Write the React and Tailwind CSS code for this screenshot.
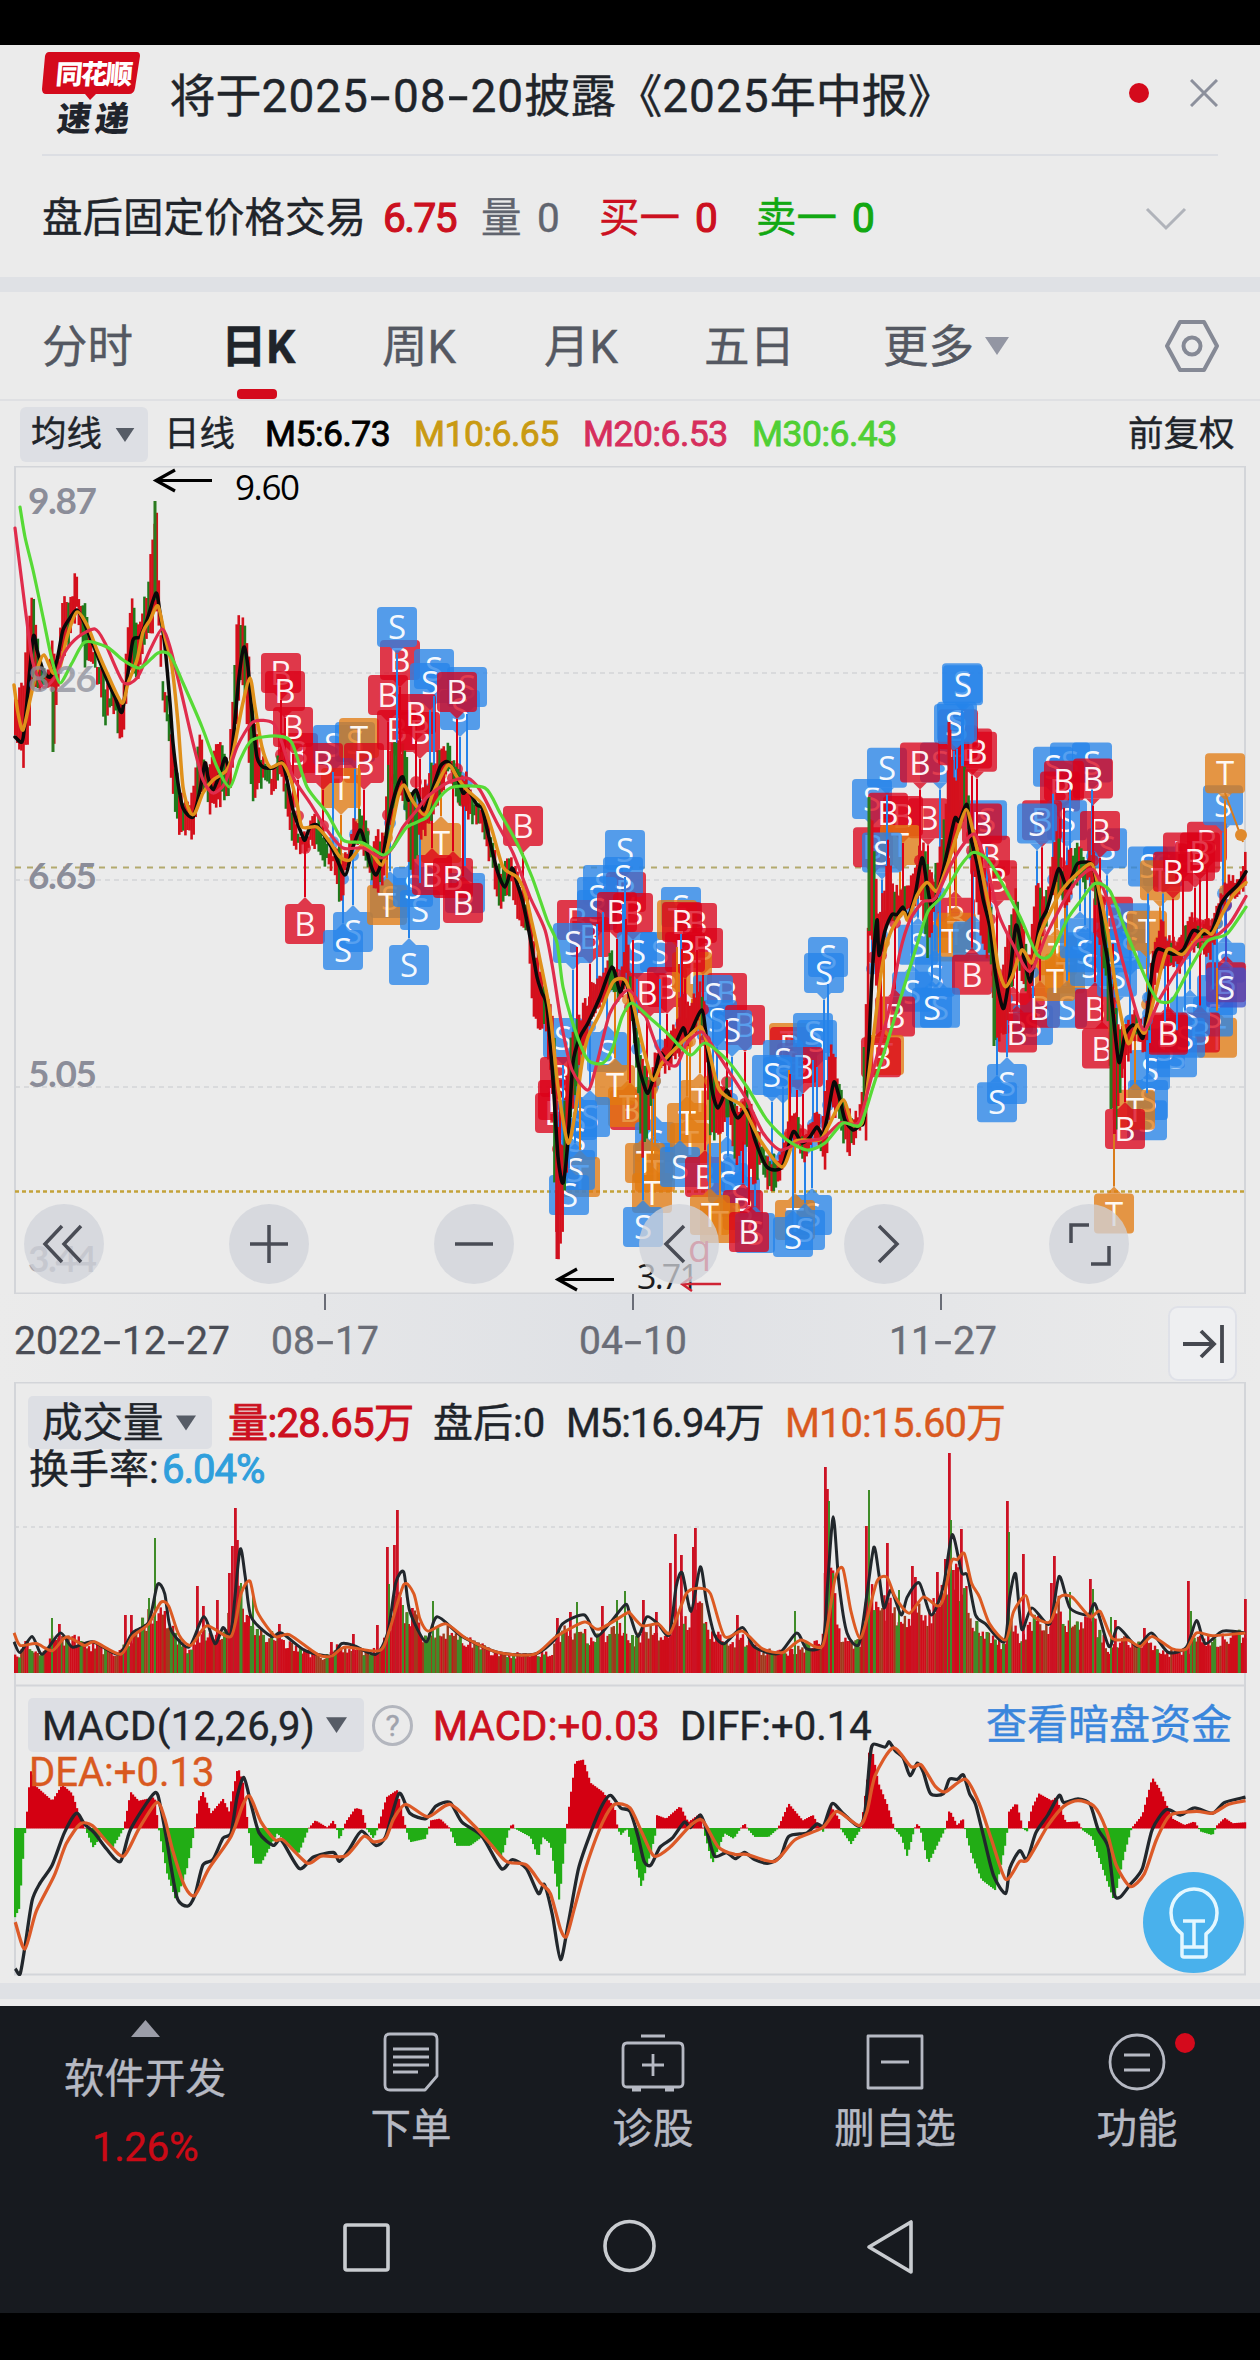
import React from 'react';

// Moving averages of the price chart, as flat x,y lists in chart pixels
const MA5 = [15,737,22,742,25,723,33,638,37,650,43,670,50,677,57,660,63,630,72,615,77,610,83,620,90,637,98,657,107,680,115,697,122,712,128,673,133,640,140,637,147,620,156,593,160,613,165,647,170,703,173,743,178,783,183,808,193,817,200,790,205,763,208,777,213,790,220,773,225,758,230,767,235,720,239,677,244,647,248,667,252,713,257,757,263,767,273,768,282,762,287,780,293,810,302,835,305,840,310,827,317,825,325,837,333,850,345,875,352,850,360,830,365,843,370,863,376,875,383,857,388,823,397,787,403,777,408,800,416,790,423,810,430,797,440,767,448,762,457,777,463,793,468,790,477,805,482,808,488,833,497,870,505,887,512,868,517,883,523,903,530,937,537,977,542,993,547,1007,553,1080,558,1157,563,1183,568,1140,573,1063,580,1037,588,1023,600,997,612,967,620,992,625,980,632,1007,637,1057,643,1082,648,1093,655,1073,660,1053,667,1060,673,1050,683,1028,688,1037,702,1010,707,1047,712,1090,718,1108,727,1090,733,1110,738,1118,747,1110,755,1140,767,1167,782,1167,793,1132,802,1143,810,1137,817,1127,823,1135,828,1113,834,1082,840,1100,845,1120,853,1130,860,1125,864,1087,868,1037,872,953,877,900,879,933,885,910,892,895,897,895,903,888,908,897,915,877,922,842,927,867,932,888,940,867,948,833,955,805,959,808,967,792,970,820,977,847,983,880,990,907,995,947,1000,973,1004,982,1010,950,1016,905,1022,927,1030,958,1035,930,1040,903,1047,890,1053,870,1059,852,1067,870,1073,857,1078,847,1092,848,1098,873,1103,913,1108,940,1113,987,1119,1033,1125,1007,1133,998,1138,1003,1143,1010,1148,980,1153,940,1158,927,1173,932,1183,928,1193,910,1203,913,1212,910,1220,887,1227,877,1237,868,1246,855];
const MA10 = [14,685,18,713,23,730,30,700,37,670,44,655,53,673,60,667,67,637,77,612,88,627,97,650,107,673,122,703,128,683,137,660,143,632,150,620,158,606,165,637,172,667,178,723,183,787,190,812,195,813,203,793,213,780,227,770,233,753,242,707,250,678,255,707,262,747,270,767,282,763,290,777,297,803,302,827,317,827,330,842,340,857,350,860,362,845,370,850,382,865,390,837,398,797,404,785,412,800,425,815,433,793,448,765,457,777,467,790,483,805,492,830,503,867,517,877,525,893,532,923,540,960,550,1013,558,1087,568,1143,575,1113,582,1063,588,1037,600,1013,613,982,625,980,633,1003,643,1047,653,1080,662,1063,677,1047,690,1035,701,1027,708,1047,718,1087,727,1097,743,1107,760,1140,782,1167,793,1143,802,1140,820,1140,828,1127,843,1100,852,1123,862,1123,867,1090,875,1023,882,967,890,913,903,893,908,900,917,877,927,865,937,873,947,850,957,820,966,797,973,817,983,860,992,903,998,943,1005,962,1012,953,1022,928,1032,940,1040,913,1053,887,1062,872,1077,857,1092,848,1100,877,1108,913,1117,970,1128,1015,1137,998,1145,1005,1155,970,1167,928,1183,932,1203,910,1212,913,1223,893,1233,877,1246,865];
const MA20 = [15,528,22,583,28,630,33,663,43,687,55,677,65,652,78,637,95,629,105,643,123,682,137,678,150,650,162,629,170,647,180,687,193,743,203,780,213,793,225,783,237,747,253,722,273,723,282,743,293,777,310,803,327,830,343,848,363,848,382,858,393,847,403,827,417,810,427,797,447,783,467,778,480,790,497,823,513,853,530,897,545,930,553,970,562,1027,572,1070,588,1090,597,1063,610,1013,628,990,643,1010,657,1047,667,1063,677,1065,687,1043,702,1032,717,1053,730,1073,747,1100,763,1133,780,1150,800,1142,823,1138,840,1123,858,1123,868,1090,883,1033,890,980,900,930,910,900,923,883,935,880,950,850,963,830,975,820,987,850,998,893,1013,923,1030,948,1047,913,1067,877,1080,860,1093,853,1107,880,1123,940,1143,1002,1160,973,1180,943,1197,920,1213,917,1230,903,1246,878];
const MA30 = [20,507,25,537,33,570,43,617,52,660,60,683,72,663,85,642,107,647,123,660,140,668,158,653,170,655,183,683,202,727,217,767,230,787,240,760,252,740,277,736,292,743,307,787,327,813,343,840,363,843,383,855,393,847,407,827,427,817,440,797,453,787,485,788,500,813,517,843,532,877,547,920,557,943,563,987,575,1030,588,1060,603,1063,613,1047,622,1017,632,1003,650,1018,667,1033,690,1055,705,1043,727,1060,747,1087,767,1120,787,1140,807,1150,825,1143,843,1123,860,1125,873,1087,888,1040,900,1000,918,920,928,892,943,877,960,850,973,837,987,843,1003,867,1020,897,1037,932,1050,933,1067,900,1080,883,1095,866,1110,873,1127,913,1147,957,1158,975,1172,975,1187,950,1207,920,1227,913,1246,888];

// High/low range of the candles: x, top, bottom
const RANGE = [14,690,740,18,690,755,22,680,767,27,620,740,31,582,690,34,610,690,40,660,695,47,665,692,51,640,690,53,650,752,56,660,694,60,610,660,64,595,655,69,600,640,75,568,615,79,600,632,84,600,668,88,625,665,95,655,680,100,665,700,104,680,728,109,690,715,114,695,710,117,700,738,122,690,740,126,630,690,131,598,672,135,620,685,140,610,665,146,590,637,151,537,635,155,501,610,158,590,640,162,680,710,167,700,740,171,740,790,175,770,828,181,800,838,187,800,835,192,790,838,196,740,815,200,735,790,204,760,790,208,770,812,215,740,812,222,740,800,227,760,805,231,700,780,236,612,720,239,617,690,243,615,680,247,650,760,252,700,807,258,750,793,265,765,780,270,770,793,280,750,780,286,780,820,292,810,850,298,830,853,305,835,850,311,810,845,318,820,855,325,840,868,333,850,870,337,840,905,341,860,912,345,850,870,352,820,850,358,810,840,364,820,870,370,850,885,377,830,893,383,835,880,388,740,840,397,740,800,405,750,810,408,800,880,411,790,880,418,800,840,428,770,830,440,745,800,448,742,770,456,770,805,465,770,820,475,800,825,482,805,835,490,830,870,499,870,910,506,850,905,510,860,890,515,860,920,520,890,937,526,895,930,532,940,1020,537,955,1030,545,990,1035,551,1010,1100,554,1050,1225,557,1120,1259,561,1150,1245,564,1080,1190,570,1030,1120,580,1010,1060,590,985,1030,600,970,1010,610,950,990,618,985,1010,625,925,980,632,1000,1040,637,1030,1100,641,1060,1160,647,1080,1130,655,1050,1080,665,1040,1070,675,1020,1065,680,990,1050,690,1000,1040,700,980,1020,706,1030,1080,709,1060,1140,717,1080,1145,727,1080,1120,735,1110,1165,745,1090,1140,752,1110,1185,760,1140,1170,767,1150,1195,777,1160,1185,785,1130,1160,794,1100,1140,802,1130,1165,812,1110,1140,820,1120,1160,825,1080,1175,829,1034,1110,836,1070,1120,842,1100,1147,850,1110,1155,858,1110,1130,861,1090,1120,866,940,1110,869,790,910,871,800,920,877,895,980,884,860,910,887,830,900,892,870,910,900,870,900,907,870,900,913,850,890,920,825,880,926,840,940,932,860,900,939,830,870,944,800,860,949,716,850,953,770,830,960,750,810,965,755,805,968,790,830,975,830,880,982,860,930,990,890,940,994,930,1018,1000,950,1010,1007,900,1000,1015,870,930,1021,900,960,1028,930,975,1036,860,930,1044,880,910,1050,840,880,1056,815,870,1062,850,890,1070,830,880,1078,830,860,1085,840,870,1092,835,860,1098,870,930,1105,900,960,1111,960,1080,1114,980,1100,1120,1000,1050,1127,990,1030,1135,985,1010,1142,1000,1030,1148,950,1000,1154,920,960,1160,900,950,1168,915,940,1178,915,950,1190,890,930,1200,900,930,1210,900,935,1219,870,900,1226,860,885,1236,860,880,1246,830,870];

const stretch = (x, y, from) => (x >= from ? 620 + ((y - 620) * 15) / 14 : y);

// Trade marks: kind + box centre, later ones lie on top
const MARKS = `B281,673 B298,753 B293,727 B285,691 S333,745 S355,742 T359,738 B364,763 T341,788 B323,763
B400,660 S397,627 B388,695 S434,669 S430,683 S467,687 S460,710 B457,692 B397,730 B420,732 B416,714
B305,924 S353,932 S343,950 S390,898 T387,905 T441,843 S420,910 S413,887 S409,965 B432,875 S465,893 B453,878 B463,903 B523,826
S625,850 S603,885 B626,892 S623,877 S597,897 B577,920 S597,910 B633,913 B590,937 B617,912 S573,943
S660,952 S637,952 B667,987 B647,993 S681,907 T677,920 B697,923 B682,922 B703,948 T692,972 B685,952
B727,993 S713,995 S717,1020 B745,1025 S732,1030 T789,1043 B790,1047 B797,1063 S813,1033 S817,1040 B803,1067 S783,1060 S783,1077 S772,1075 S828,957 S824,973
S563,1038 B560,1077 B555,1113 B558,1100 S607,1052 B630,1110 T628,1107 T615,1085 S590,1117 S577,1120 S577,1140 T580,1177 S575,1170 S569,1195
S655,1142 S653,1163 T655,1172 T645,1163 T652,1193 S643,1227 T700,1100 T690,1143 T687,1123 S680,1167 B705,1177 S727,1163 S728,1183 S740,1197 B743,1210 T720,1223 T710,1215 S755,1233 B749,1232 S812,1215 T795,1220 S805,1230 S793,1237
S872,787 S887,758 S940,753 B958,737 S962,679 S963,681 B972,740 B977,743 B958,722 S957,715 S954,717 B920,753 B928,805 B903,803 B888,800 B873,832 T900,830 S882,837
S987,807 B982,810 B990,840 B997,863 B955,898 T956,912 T950,920 S973,920 S918,923 S935,953 B972,951 S912,967 S940,982 S932,982 B895,990 T884,1026 B881,1028
S1070,753 S1092,753 S1053,757 B1060,780 B1064,770 B1093,768 S1067,807 B1042,807 S1037,810 S1107,833 B1100,817
B1013,987 S1033,998 B1017,1005 B1040,982 S1007,1053 S997,1070 T1057,933 T1065,950 S1067,982 T1055,957 S1080,917 S1085,930 S1090,943 B1095,983 B1102,1020 B1113,897 S1130,903 S1130,927 S1117,953 S1112,930 T1147,910
S1163,850 S1148,850 T1160,863 B1183,837 B1207,827 B1200,837 B1195,845 B1173,855 S1223,793 T1225,763
T1217,1010 S1225,940 S1217,970 S1213,990 B1200,1005 S1190,990 S1177,1028 S1165,1020 S1150,1040 S1185,1010 B1168,1007 B1168,1005 S1147,1087 S1148,1068 T1135,1077 B1125,1095 T1114,1174 B1226,958 X1226,963`
  .split(/\s+/)
  .map((m) => {
    const [x, y] = m.slice(1).split(',').map(Number);
    return { kind: m[0], x, y: stretch(x, y, 863) };
  });

const MARK_COLORS = { B: '#dc0018', S: '#2583ea', T: '#e27a10', X: '#3b53cf' };

// Volume and MACD data are kept on a finer grid, one list for each half of the chart
const GX = 2.489;
const GY = 2.8;
const grid = (left, right) => {
  const out = [];
  for (let i = 0; i < left.length; i += 2) out.push([left[i] / GX, 1440 + left[i + 1] / GY]);
  for (let i = 0; i < right.length; i += 2) out.push([630 + right[i] / GX, 1440 + right[i + 1] / GY]);
  return out;
};

const VOL = grid(
  [35,600,45,600,55,560,90,600,130,555,150,560,185,560,240,580,290,600,320,560,350,520,375,480,400,480,430,540,465,590,490,540,520,550,550,550,575,480,590,400,605,500,640,540,690,555,740,580,800,610,840,580,900,590,940,590,965,540,985,420,1005,490,1030,500,1060,560,1090,520,1130,550,1180,570,1230,595,1310,605,1375,595,1382,540,1430,530,1480,560,1540,520],
  [0,560,50,530,90,560,110,470,140,510,165,440,200,540,240,570,270,550,320,590,380,595,420,580,475,570,485,350,500,380,520,560,570,570,590,400,610,450,650,470,690,520,710,450,740,500,775,420,800,360,825,400,850,500,880,545,930,570,945,500,970,560,1000,510,1040,520,1060,430,1080,530,1110,500,1150,500,1190,590,1230,560,1280,570,1340,595,1390,590,1400,560,1450,560,1535,540]
);
const VOL5 = grid(
  [35,565,50,595,80,550,105,600,150,540,180,580,230,565,295,600,330,540,370,510,392,405,410,430,425,530,470,580,507,495,535,570,555,525,575,540,597,308,610,380,625,495,675,550,700,540,760,590,825,605,850,570,880,575,935,600,965,540,985,400,1005,370,1020,480,1060,565,1088,495,1150,550,1240,595,1330,600,1380,560,1400,515,1455,490,1485,550,1520,510,1557,460],
  [0,490,20,550,42,495,70,515,98,545,115,410,130,372,152,480,175,355,190,450,210,545,235,570,280,525,310,580,370,598,415,540,440,585,480,570,492,400,506,215,520,400,540,540,570,572,590,430,607,300,620,380,632,470,650,420,675,490,690,440,720,400,750,490,780,410,802,265,825,370,840,380,860,490,885,515,932,565,945,440,960,375,975,530,1000,470,1045,515,1068,382,1095,470,1140,490,1158,460,1192,578,1215,525,1262,578,1298,540,1340,595,1385,580,1410,505,1432,570,1475,535,1532,540]
);
const VOL10 = grid(
  [35,540,50,575,90,570,130,590,165,552,210,575,235,565,300,600,330,550,370,515,400,455,420,465,445,545,475,575,515,520,575,550,600,430,622,395,640,480,685,550,720,545,790,600,825,605,860,580,945,590,970,530,1005,405,1030,430,1045,500,1065,535,1110,515,1160,555,1240,595,1330,600,1385,550,1455,510,1490,530,1560,485],
  [0,485,30,520,70,515,100,540,140,430,170,415,200,430,235,550,280,535,330,585,380,595,425,560,480,575,510,390,530,360,550,480,572,555,590,500,615,395,640,385,660,440,695,485,730,440,765,465,780,445,800,340,815,335,832,318,850,400,870,440,895,515,935,560,955,480,985,435,1000,490,1045,510,1070,440,1100,440,1145,495,1170,480,1200,555,1240,560,1270,578,1300,550,1350,585,1385,585,1410,540,1450,548,1532,540]
);
// Single tall volume bars
const SPIKES = 'g155,1538 r197,1586 r203,1606 r217,1600 r229,1573 r232,1546 r235,1508 r237,1540 g241,1583 g52,1618 r59,1624 r125,1615 r131,1615 g149,1598 g253,1596 r279,1624 r331,1642 r353,1634 r377,1625 r387,1547 g389,1584 r394,1545 r397,1510 g403,1605 r412,1608 g433,1601 r557,1618 r570,1612 g577,1602 r602,1606 g617,1600 g625,1591 r643,1600 r656,1612 r670,1563 r675,1534 r681,1555 r693,1547 r695,1528 r737,1615 g795,1611 r825,1467 r827,1489 g829,1501 g833,1573 r866,1526 g869,1490 r887,1543 r912,1566 r915,1577 g899,1590 r937,1572 r945,1559 r949,1453 g951,1520 r953,1570 r961,1529 r1007,1501 g1009,1532 r1023,1554 r1051,1583 r1054,1556 g1070,1592 r1090,1579 g1093,1589 g1111,1617 r1115,1620 r1144,1628 r1188,1581 g1191,1611 r1245,1599'
  .split(' ')
  .map((s) => [s[0], ...s.slice(1).split(',').map(Number)]);

const HIST = grid(
  [35,1340,48,1310,62,1100,66,1087,68,1010,78,920,90,970,130,1010,155,965,180,990,200,1060,212,1087,232,1140,250,1110,280,1140,308,1087,325,985,345,1010,385,1000,395,1087,415,1210,438,1290,465,1200,485,1087,495,1010,505,985,525,1045,555,1005,570,1040,592,915,605,960,618,1087,632,1185,650,1185,690,1100,742,1160,768,1087,785,1065,815,1085,830,1065,838,1087,845,1120,860,1070,885,1030,900,1035,912,1087,930,1115,940,1087,962,1000,988,980,1010,1087,1020,1125,1060,1115,1072,1065,1095,1060,1120,1087,1135,1135,1170,1135,1200,1110,1248,1170,1268,1087,1275,1073,1282,1087,1320,1110,1340,1170,1350,1110,1370,1130,1392,1290,1410,1087,1418,1010,1432,900,1452,895,1470,960,1500,985,1530,1030,1537,1087,1545,1105,1560,1087],
  [0,1120,28,1250,62,1110,66,1050,90,1060,125,1025,145,1070,175,1045,182,1087,205,1185,235,1100,258,1115,275,1087,285,1073,292,1087,310,1110,345,1110,368,1087,395,1018,430,1065,455,1050,470,1080,482,1098,490,1060,500,1025,520,1060,524,1087,550,1130,575,1087,590,950,597,843,605,880,618,960,640,1020,658,1087,675,1110,690,1165,708,1087,716,1073,722,1087,742,1185,785,1087,795,1035,815,1080,828,1058,838,1110,850,1160,875,1230,910,1260,938,1110,940,1045,962,1015,978,1087,988,1095,1000,1030,1018,990,1050,1010,1060,1000,1085,1070,1115,1068,1125,1090,1150,1110,1175,1195,1205,1290,1230,1160,1248,1087,1275,1050,1300,945,1320,980,1350,1060,1380,1078,1405,1068,1420,1095,1450,1105,1460,1080,1480,1058,1500,1073,1535,1070]
);
const DIFF = grid(
  [38,1480,50,1495,62,1420,80,1290,100,1240,130,1190,160,1100,190,1045,210,1075,235,1100,265,1145,300,1180,325,1090,385,988,400,1030,415,1120,440,1280,467,1305,485,1275,505,1190,530,1175,555,1115,575,1100,590,1000,607,945,625,1020,645,1100,680,1135,700,1120,745,1200,780,1168,830,1155,845,1180,870,1145,900,1095,935,1135,960,1110,993,990,1020,1045,1060,1060,1085,1025,1120,1015,1150,1070,1200,1110,1248,1200,1275,1175,1310,1200,1340,1270,1355,1245,1375,1330,1395,1455,1415,1350,1440,1200,1470,1100,1500,1020,1520,995,1545,1030],
  [0,1040,20,1110,35,1180,52,1190,75,1140,105,1115,135,1070,150,1085,175,1050,190,1090,210,1165,240,1155,262,1172,285,1155,310,1175,345,1185,375,1165,395,1110,440,1100,465,1075,482,1080,503,1018,530,1045,570,1082,585,1040,597,890,605,852,635,860,645,845,660,870,680,890,697,940,715,905,730,930,748,990,780,990,795,950,815,950,830,938,845,990,860,1020,880,1110,905,1220,935,1270,945,1200,970,1150,988,1175,1010,1100,1040,1050,1068,995,1080,1015,1115,1005,1145,1020,1165,1090,1190,1140,1205,1270,1220,1280,1245,1245,1275,1200,1300,1090,1335,1035,1370,1050,1405,1030,1450,1045,1480,1015,1532,1000]
);
const DEA = grid(
  [38,1350,62,1425,90,1320,135,1220,165,1130,200,1075,230,1080,270,1130,308,1165,345,1090,390,1015,410,1060,430,1150,460,1250,485,1275,520,1200,575,1110,605,1020,622,998,650,1070,685,1120,705,1120,765,1185,800,1165,860,1165,905,1110,930,1125,960,1115,980,1060,1010,1020,1065,1055,1120,1020,1180,1080,1220,1130,1260,1180,1310,1190,1345,1240,1370,1270,1395,1370,1410,1390,1430,1310,1460,1190,1500,1070,1530,1020],
  [0,1030,30,1100,60,1165,100,1140,150,1080,180,1065,220,1140,260,1160,290,1160,360,1180,410,1120,480,1085,515,1040,570,1080,590,1040,610,940,655,862,700,915,725,910,760,970,785,985,835,950,870,1020,900,1120,935,1230,970,1180,990,1175,1040,1080,1080,1025,1115,1010,1155,1025,1185,1090,1210,1190,1245,1250,1280,1215,1310,1120,1345,1050,1410,1040,1450,1045,1490,1020,1532,1010]
);

const noise = (n) => {
  const v = Math.sin(n * 12.9898) * 43758.5453;
  return v - Math.floor(v);
};

const pairs = (flat, from) => {
  const out = [];
  for (let i = 0; i < flat.length; i += 2) out.push([flat[i], stretch(flat[i], flat[i + 1], from)]);
  return out;
};

const triples = (flat, from) => {
  const out = [];
  for (let i = 0; i < flat.length; i += 3) {
    out.push([flat[i], stretch(flat[i], flat[i + 1], from), stretch(flat[i], flat[i + 2], from)]);
  }
  return out;
};

const valueAt = (pts, x, k = 1) => {
  let i = 1;
  while (i < pts.length - 1 && pts[i][0] < x) i += 1;
  const a = pts[i - 1];
  const b = pts[i];
  const t = Math.min(1, Math.max(0, (x - a[0]) / (b[0] - a[0])));
  return a[k] + (b[k] - a[k]) * t;
};

// Smooth path through the points
const curve = (pts) => {
  let d = `M${pts[0][0]} ${pts[0][1]}`;
  for (let i = 1; i < pts.length; i += 1) {
    const p0 = pts[Math.max(0, i - 2)];
    const p1 = pts[i - 1];
    const p2 = pts[i];
    const p3 = pts[Math.min(pts.length - 1, i + 1)];
    const n = [p1[0] + (p2[0] - p0[0]) / 8, p1[1] + (p2[1] - p0[1]) / 8, p2[0] - (p3[0] - p1[0]) / 8, p2[1] - (p3[1] - p1[1]) / 8, p2[0], p2[1]];
    d += `C${n.map((v) => v.toFixed(1)).join(' ')}`;
  }
  return d;
};

const ma5 = pairs(MA5, 863);
const ma10 = pairs(MA10, 889);
const ma20 = pairs(MA20, 889);
const ma30 = pairs(MA30, 917);
const range = triples(RANGE, 863);

const candles = [];
for (let x = 14; x <= 1244; x += 2.05) {
  const top = valueAt(range, x, 1) - 3 + noise(x) * 14;
  const bottom = valueAt(range, x, 2) + 3 - noise(x + 7) * 14;
  const rising = valueAt(range, x + 3, 1) < valueAt(range, x - 3, 1);
  candles.push({ x, top, h: Math.max(5, bottom - top), up: noise(x + 3) < (rising ? 0.9 : 0.6) });
}

const volumes = [];
for (let x = 14; x <= 1244; x += 2.05) {
  const y = valueAt(VOL, x);
  volumes.push({ x, y: Math.min(1660, y + (noise(x + 1) - 0.4) * (1673 - y) * 0.4), up: noise(x + 3) < 0.7 });
}

const hist = [];
for (let x = 14; x <= 1244; x += 2) hist.push({ x, y: valueAt(HIST, x + 1) });

const Mark = ({ kind, x, y }) => {
  const below = y > valueAt(ma5, x);
  const color = MARK_COLORS[kind];
  return (
    <g>
      <rect x={x - 20} y={y - 20} width="40" height="40" rx="4" fill={color} opacity="0.76" />
      <path d={below ? `M${x - 7} ${y - 20}l7 -7l7 7z` : `M${x - 7} ${y + 20}l7 7l7 -7z`} fill={color} opacity="0.76" />
      <text x={x} y={y + 12} textAnchor="middle" fontSize="33" fill="#fff" fillOpacity="0.95">{kind === 'X' ? 'S' : kind}</text>
    </g>
  );
};

const Stem = ({ kind, x, y }) => {
  const end = valueAt(ma5, x);
  const gap = Math.abs(end - y);
  if (gap < 30) return null;
  const start = y + (end > y ? 27 : -27);
  return (
    <g stroke={MARK_COLORS[kind]} fill={MARK_COLORS[kind]}>
      <line x1={x} x2={x} y1={start} y2={end} strokeWidth="2" />
      <circle cx={x} cy={end + (end > y ? -8 : 8)} r="6" stroke="none" opacity="0.7" />
    </g>
  );
};

const PriceChart = () => (
  <svg className="block h-[828px] w-[1260px] font-['Open_Sans',sans-serif]" viewBox="0 466 1260 828">
    <rect x="15" y="466.500" width="1230" height="827" fill="none" stroke="#d3d5d9" strokeWidth="2" />
    <path d="M15 673H1245M15 880H1245M15 1087H1245" stroke="#d4d5d7" strokeWidth="1.500" strokeDasharray="5 4" />
    <path d="M15 867.500H1245" stroke="#b3aa6e" strokeWidth="2" strokeDasharray="6 6" />
    <path d="M15 1191.500H1245" stroke="#c3a23a" strokeWidth="2.500" strokeDasharray="4 3" />
    {MARKS.map((m, i) => <Mark key={i} {...m} />)}
    {MARKS.map((m, i) => <Stem key={i} {...m} />)}
    <path d="M1225 793L1243 842" stroke="#d97c1c" strokeWidth="2" />
    <circle cx="1241" cy="835" r="6" fill="#e08a2c" />
    <path d="M1114 1130V1186" stroke="#d97c1c" strokeWidth="2" />
    {candles.map((c) => <rect key={c.x} x={c.x} y={c.top} width="2.600" height={c.h} fill={c.up ? '#d4101c' : '#1f7a1c'} />)}
    <path d="M53 690V752M155 501V600M869 797V931M994 952V1046M1111 984V1109" stroke="#2b7a1f" strokeWidth="3" />
    <path d="M949 722V813M557 1190V1259M1114.500 1014V1134" stroke="#cf1020" strokeWidth="3" />
    <g fill="none" strokeWidth="3.200" strokeLinejoin="round" strokeLinecap="round">
      <path d={curve(ma5)} stroke="#0a0a0a" strokeWidth="3.500" />
      <path d={curve(ma10)} stroke="#e0901a" strokeWidth="3.500" />
      <path d={curve(ma20)} stroke="#e02c4c" />
      <path d={curve(ma30)} stroke="#57da36" />
    </g>
    <g fontFamily="Lato, sans-serif" fontWeight="700" fontSize="37" fill="#8b8d99">
      <text x="28" y="514" textLength="69">9.87</text>
      <text x="28" y="692" textLength="69" opacity="0.75">8.26</text>
      <text x="28" y="889" textLength="69">6.65</text>
      <text x="28" y="1087" textLength="69">5.05</text>
      <text x="28" y="1272" textLength="69" opacity="0.7">3.44</text>
    </g>
    <g fill="none" stroke="#000" strokeWidth="3.200">
      <path d="M212 480.500H156M175 470L156 480.500L175 491" />
      <path d="M614 1279.500H558M577 1269L558 1279.500L577 1290" />
    </g>
    <text x="235" y="500" fontSize="35" textLength="65" fill="#000">9.60</text>
    <text x="637" y="1289" fontSize="34" textLength="62" fill="#1c1c1e">3.71</text>
    <text x="688" y="1262" fontSize="38" fill="#d8203f">q</text>
    <path d="M721 1284H682M692 1277L682 1284L692 1291" fill="none" stroke="#cf2334" strokeWidth="2.500" />
  </svg>
);

const Panels = () => (
  <svg className="block h-[594px] w-[1260px]" viewBox="0 1382 1260 594">
    <g fill="none" stroke="#d3d5d9" strokeWidth="2">
      <path d="M15 1685V1382.500H1245V1685" />
      <rect x="15" y="1685.500" width="1230" height="289" />
    </g>
    <path d="M15 1527H1245" stroke="#d4d5d7" strokeWidth="1.500" strokeDasharray="4 4" />
    {volumes.map((v) => <rect key={v.x} x={v.x} y={v.y} width="2.400" height={1673 - v.y} fill={v.up ? '#cf0d1a' : '#a03a1c'} />)}
    {volumes.filter((v) => noise(v.x + 11) < 0.18).map((v) => <rect key={v.x} x={v.x} y={v.y} width="3" height={1673 - v.y} fill="#3f8c28" />)}
    {SPIKES.map(([c, x, y]) => <rect key={`${x}-${y}`} x={x - 1} y={y} width={c === 'r' ? 2.8 : 2} height={1673 - y} fill={c === 'r' ? '#cc1224' : '#3f8c28'} />)}
    <g fill="none" strokeWidth="3" strokeLinejoin="round">
      <path d={curve(VOL5)} stroke="#22272c" />
      <path d={curve(VOL10)} stroke="#dc5a22" />
    </g>
    {hist.map((b) => (
      <rect key={b.x} x={b.x} y={Math.min(b.y, 1828)} width="2.200" height={Math.abs(b.y - 1828) + 0.5} fill={b.y < 1828 ? '#d40012' : '#22ad15'} />
    ))}
    <g fill="none" strokeWidth="3.300" strokeLinejoin="round">
      <path d={curve(DIFF)} stroke="#22272c" />
      <path d={curve(DEA)} stroke="#dc5a28" />
    </g>
  </svg>
);

// Dates use a wider hyphen than the font has
const DateText = ({ value }) => value.split('').map((ch, i) => (
  ch === '-' ? <span key={i} className="inline-block w-[0.52em] scale-x-[1.6] text-center">-</span> : ch
));

const Caret = ({ className }) => (
  <svg className={className} viewBox="0 0 20 15"><path d="M0 0H20L10 15Z" fill="currentColor" /></svg>
);

const RoundButton = ({ children }) => (
  <div className="flex h-20 w-20 items-center justify-center rounded-full bg-[#d0d3da]/75">
    <svg className="h-20 w-20" viewBox="0 0 80 80" fill="none" stroke="#494c55" strokeWidth="3.500">{children}</svg>
  </div>
);

const TabItem = ({ label, icon }) => (
  <div className="flex w-[242px] flex-col items-center">
    <svg className="mt-[24px] h-[64px] w-[64px]" viewBox="0 0 64 64" fill="none" stroke="#b6b9c3" strokeWidth="2.800" strokeLinejoin="round">{icon}</svg>
    <span className="mt-[5px] leading-[60px]">{label}</span>
  </div>
);

const App = () => (
  <div className="w-[1260px] overflow-hidden whitespace-nowrap bg-black font-[Roboto,'Noto_Sans_CJK_SC',sans-serif] text-[#20242a] [-webkit-text-stroke:0.4px]">
    <div className="mt-[45px] h-[1961px] bg-[#ebebeb]">
      {/* News line */}
      <div className="mx-[42px] flex h-[111px] items-center border-b-2 border-[#dcdee3]">
        <div className="mt-[-11px] h-[84px] w-[128px]">
          <svg className="h-[84px] w-[100px]" viewBox="0 0 100 84">
            <path d="M7 0H95Q98 0 98 4L93 36Q92 42 87 42H54L48 48L43 42H4Q0 42 0 37L3 4Q4 0 7 0Z" fill="#d40a1c" />
            <g fontFamily="'Noto Sans CJK SC', sans-serif" fontWeight="900">
              <text transform="translate(13 32) skewX(-5)" fontSize="27" textLength="77" fill="#fff">同花顺</text>
              <text transform="translate(14 79) skewX(-7)" fontSize="34" textLength="72" fill="#20242c">速递</text>
            </g>
          </svg>
        </div>
        <div className="mt-[-8px] flex w-[963px] text-[46px] leading-[60px]">
          <span>将于</span>
          <span className="tracking-[1px]"><DateText value="2025-08-20" /></span>
          <span>披露《</span>
          <span className="tracking-[1px]">2025</span>
          <span>年中报》</span>
        </div>
        <div className="mt-[-13px] h-5 w-5 shrink-0 rounded-full bg-[#d40a1c]" />
        <svg className="mt-[-13px] ml-[41px] h-7 w-7 shrink-0" viewBox="0 0 28 28" stroke="#8c909c" strokeWidth="3"><path d="M1 1L27 27M27 1L1 27" /></svg>
      </div>

      {/* After-hours trading */}
      <div className="flex h-[121px] items-center pt-[4px] pl-[42px] text-[40.500px]">
        <span className="w-[341px]">盘后固定价格交易</span>
        <span className="w-[98px] tracking-[-1.500px] text-[#cc1020] [-webkit-text-stroke:1.200px]">6.75</span>
        <span className="w-[56px] text-[#60646e]">量</span>
        <span className="w-[62px] text-[#60646e]">0</span>
        <span className="w-[96px] text-[#cc1020]">买一</span>
        <span className="w-[61px] text-[#cc1020] [-webkit-text-stroke:1.200px]">0</span>
        <span className="w-[96px] text-[#12a812]">卖一</span>
        <span className="w-[293px] text-[#12a812] [-webkit-text-stroke:1.200px]">0</span>
        <svg className="h-[24px] w-[42px]" viewBox="0 0 42 24" fill="none" stroke="#b0b3ba" strokeWidth="3"><path d="M2 2L21 21L40 2" /></svg>
      </div>
      <div className="h-[15px] bg-[#dfe1e5]" />

      {/* Period tabs */}
      <div className="flex h-[109px] items-center border-b-2 border-[#dfe0e3] pl-[42px] text-[45.500px] text-[#545862]">
        <span className="w-[179px] pt-[5px]">分时</span>
        <div className="flex h-full w-[161px] flex-col text-[#20242a]">
          <span className="h-[97px] pt-[22px] font-bold leading-[68px]">日K</span>
          <span className="ml-[16px] h-[10px] w-[40px] shrink-0 rounded-[4px] bg-[#d40a1c]" />
        </div>
        <span className="w-[162px] pt-[5px]">周K</span>
        <span className="w-[160px] pt-[5px]">月K</span>
        <span className="w-[179px] pt-[5px]">五日</span>
        <span className="w-[102px] pt-[5px]">更多</span>
        <Caret className="h-[20px] w-[24px] text-[#9396a3]" />
        <svg className="ml-[156px] h-[54px] w-[54px]" viewBox="0 0 54 54" fill="none" stroke="#858995" strokeWidth="4" strokeLinejoin="round">
          <path d="M15 3H39L52 27L39 51H15L2 27Z" /><circle cx="27" cy="27" r="8.500" />
        </svg>
      </div>

      {/* Moving averages */}
      <div className="flex h-[65px] items-center pt-[2px] pl-5 text-[35.500px]">
        <div className="flex h-[55px] w-[128px] items-center rounded-[6px] bg-[#dddfe4] pl-[11px]">
          <span className="w-[84px]">均线</span>
          <Caret className="h-[14px] w-[20px] text-[#565c66]" />
        </div>
        <span className="ml-[16px] w-[101px]">日线</span>
        <span className="w-[149px] tracking-[-0.500px] text-black [-webkit-text-stroke:0.900px]">M5:6.73</span>
        <span className="w-[169px] tracking-[-0.500px] text-[#c99a12] [-webkit-text-stroke:0.900px]">M10:6.65</span>
        <span className="w-[169px] tracking-[-0.500px] text-[#d62e5c] [-webkit-text-stroke:0.900px]">M20:6.53</span>
        <span className="w-[376px] tracking-[-0.500px] text-[#4fcf34] [-webkit-text-stroke:0.900px]">M30:6.43</span>
        <span>前复权</span>
      </div>

      <div className="relative h-[828px]">
        <PriceChart />
        <div className="absolute top-[738px] left-[24px] flex gap-[125px]">
          <RoundButton><path d="M38 22L21 40L38 58M57 22L40 40L57 58" /></RoundButton>
          <RoundButton><path d="M40 21V59M21 40H59" /></RoundButton>
          <RoundButton><path d="M21 40H59" /></RoundButton>
          <RoundButton><path d="M45 22L27 40L45 58" /></RoundButton>
          <RoundButton><path d="M35 22L53 40L35 58" /></RoundButton>
          <RoundButton><path d="M22 39V21H40M42 60H60V42" /></RoundButton>
        </div>
      </div>

      {/* Date axis */}
      <div className="relative h-[88px] bg-linear-to-r from-[#ebebeb] via-[#dfe1e5] to-[#ebebeb] text-[39px] text-[#6a6d77]">
        <div className="flex h-4">
          <span className="ml-[324px] h-4 w-[2px] bg-[#6a6d77]" />
          <span className="ml-[306px] h-4 w-[2px] bg-[#6a6d77]" />
          <span className="ml-[306px] h-4 w-[2px] bg-[#6a6d77]" />
        </div>
        <div className="flex pl-[14px] leading-[62px]">
          <span className="w-[257px] text-[#4a4d56]"><DateText value="2022-12-27" /></span>
          <span className="w-[308px]"><DateText value="08-17" /></span>
          <span className="w-[310px]"><DateText value="04-10" /></span>
          <span><DateText value="11-27" /></span>
        </div>
        <div className="absolute top-[12px] left-[1168px] flex h-[75px] w-[69px] items-center justify-center rounded-[10px] border-2 border-[#dfe1e8] bg-[#eeeff1]">
          <svg className="h-10 w-11" viewBox="0 0 44 40" fill="none" stroke="#45484f" strokeWidth="3.800"><path d="M2 20H32M20 7L33 20L20 33M41 1V39" /></svg>
        </div>
      </div>

      <div className="relative h-[594px]">
        <Panels />
        <div className="absolute top-0 left-0 h-full w-full text-[40px]">
          <div className="flex h-[67px] items-end pl-[28px]">
            <div className="flex h-[53px] w-[184px] items-center rounded-[5px] bg-[#dddfe4] pl-[14px] text-[40.500px]">
              <span className="w-[134px] pt-[2px]">成交量</span>
              <Caret className="h-[16px] w-[20px] text-[#565c66]" />
            </div>
            <div className="ml-[16px] flex leading-[51px]">
              <span className="w-[205px] tracking-[-0.600px] text-[#cc1020] [-webkit-text-stroke:1px]">量:28.65万</span>
              <span className="w-[133px]">盘后:0</span>
              <span className="w-[219px] tracking-[-1.100px]">M5:16.94万</span>
              <span className="tracking-[-1px] text-[#d9591f]">M10:15.60万</span>
            </div>
          </div>
          <div className="flex h-[42px] items-center pl-[29px] leading-[42px]">
            <span className="w-[133px]">换手率:</span>
            <span className="tracking-[-1px] text-[#2f9fdc] [-webkit-text-stroke:1px]">6.04%</span>
          </div>
          <div className="mt-[207px] flex h-[54px] items-center pl-[28px]">
            <div className="flex h-[54px] w-[336px] items-center rounded-[5px] bg-[#dddfe4] pl-[14px]">
              <span className="w-[284px] pt-[3px] tracking-[0.300px]">MACD(12,26,9)</span>
              <Caret className="h-[16px] w-[21px] text-[#565c66]" />
            </div>
            <span className="ml-[8px] flex h-[41px] w-[41px] items-center justify-center rounded-full border-[3px] border-[#b3b6be] text-[30px] text-[#a0a3ad]">?</span>
            <span className="ml-[20px] w-[247px] pt-[3px] tracking-[0.300px] text-[#cc1020] [-webkit-text-stroke:0.800px]">MACD:+0.03</span>
            <span className="w-[306px] pt-[3px]">DIFF:+0.14</span>
            <span className="pt-[2px] text-[41px] text-[#3a86dc]">查看暗盘资金</span>
          </div>
          <div className="pl-[29px] leading-[42px] text-[#d9591f]">DEA:+0.13</div>
        </div>
        <div className="absolute top-[490px] left-[1143px] flex h-[101px] w-[101px] items-center justify-center rounded-full bg-[#49b1ec]">
          <svg className="h-[72px] w-[50px]" viewBox="0 0 50 72" fill="none" stroke="#e4f7ff" strokeWidth="3.500" strokeLinejoin="round">
            <path d="M13 68V47C5 41 2 33 2 26A23 24 0 0 1 48 26C48 33 45 41 37 47V68Q37 70 35 70H15Q13 70 13 68ZM13 60H37M14 34H36M25 34V60" />
          </svg>
        </div>
      </div>
      <div className="mt-[7px] h-[16px] bg-[#dfe1e5]" />
    </div>

    {/* Bottom bar */}
    <div className="h-[307px] bg-[#171a1f] text-[40.500px] text-[#b6b9c3]">
      <div className="flex h-[187px]">
        <div className="flex w-[290px] flex-col items-center">
          <svg className="mt-[14px] h-[17px] w-[29px]" viewBox="0 0 29 17"><path d="M14.500 0L29 17H0Z" fill="#9b9da8" /></svg>
          <span className="mt-[12px] leading-[60px]">软件开发</span>
          <span className="mt-[8px] tracking-[-0.500px] leading-[60px] text-[#cc0a16]">1.26%</span>
        </div>
        <TabItem label="下单" icon={<path d="M11 4H53Q58 4 58 9V46L46 60H11Q6 60 6 55V9Q6 4 11 4ZM14 19H50M14 27H50M14 35H50M14 42H39" />} />
        <TabItem label="诊股" icon={<path d="M6 13H58Q62 13 62 18V53Q62 57 58 57H6Q2 57 2 53V18Q2 13 6 13ZM20 6H44M32 24V46M21 35H43M11 60H20M44 60H53" />} />
        <TabItem label="删自选" icon={<path d="M5 6H59V58H5ZM18 32H46" />} />
        <div className="relative">
          <TabItem label="功能" icon={<><circle cx="32" cy="32" r="27" /><path d="M19 25H45M19 40H45" /></>} />
          <span className="absolute top-[27px] left-[159px] h-5 w-5 rounded-full bg-[#d40a1c]" />
        </div>
      </div>
      <svg className="block h-[120px] w-[1260px]" viewBox="0 0 1260 120" fill="none" stroke="#c9ccd0" strokeWidth="3.600" strokeLinejoin="round">
        <rect x="345" y="32" width="43" height="45" rx="2" />
        <circle cx="629.500" cy="53" r="24.500" />
        <path d="M911 29V79L869 54Z" />
      </svg>
    </div>
    <div className="h-[47px] bg-black" />
  </div>
);

export default App;
